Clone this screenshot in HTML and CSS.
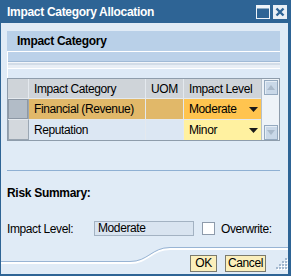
FILE: index.html
```html
<!DOCTYPE html>
<html>
<head>
<meta charset="utf-8">
<link rel="stylesheet" href="styles.css">
</head>
<body>
<div class="dialog">
  <div class="titlebar">
    <span class="title">Impact Category Allocation</span>
    <div class="tbtns">
      <svg class="tbtn" width="14" height="14" viewBox="0 0 14 14">
        <rect x="0.5" y="0.5" width="13" height="13" fill="#2e6495" stroke="#eef3f8"/>
        <rect x="1" y="1" width="12" height="2.5" fill="#eef3f8"/>
      </svg>
      <svg class="tbtn" width="14" height="14" viewBox="0 0 14 14">
        <rect x="0" y="0" width="14" height="14" fill="#e9eff5"/>
        <path d="M3.5 3.5 L10.5 10.5 M10.5 3.5 L3.5 10.5" stroke="#2e6495" stroke-width="2.4"/>
      </svg>
    </div>
  </div>
  <div class="body">
    <div class="panel-head">Impact Category</div>
    <div class="toolbar"></div>
    <div class="table">
      <div class="grid">
        <div class="cell hd sel-hd"></div>
        <div class="cell hd">Impact Category</div>
        <div class="cell hd">UOM</div>
        <div class="cell hd last">Impact Level</div>

        <div class="cell sel"><div class="selbox on"></div></div>
        <div class="cell r1">Financial (Revenue)</div>
        <div class="cell r1"></div>
        <div class="cell lvl lvl1 last"><span>Moderate</span><svg width="9" height="5" viewBox="0 0 9 5"><path d="M0 0 H9 L4.5 5 Z" fill="#1a1a1a"/></svg></div>

        <div class="cell sel bottom"><div class="selbox"></div></div>
        <div class="cell r2 bottom">Reputation</div>
        <div class="cell r2 bottom"></div>
        <div class="cell lvl lvl2 bottom last"><span>Minor</span><svg width="9" height="5" viewBox="0 0 9 5"><path d="M0 0 H9 L4.5 5 Z" fill="#1a1a1a"/></svg></div>
      </div>
      <div class="scroll">
        <div class="sbtn"><svg width="8" height="5" viewBox="0 0 8 5"><path d="M0 5 H8 L4 0 Z" fill="#a9b9ca"/></svg></div>
        <div class="sbtn"><svg width="8" height="5" viewBox="0 0 8 5"><path d="M0 0 H8 L4 5 Z" fill="#a9b9ca"/></svg></div>
      </div>
    </div>
    <div class="sep"></div>
    <div class="section">Risk Summary:</div>
    <div class="formrow">
      <span class="lbl">Impact Level:</span>
      <div class="input">Moderate</div>
      <div class="chk"></div>
      <span>Overwrite:</span>
    </div>
  </div>
  <div class="footer">
    <svg class="curve" width="287" height="32" viewBox="0 0 287 32">
      <path d="M0 21 L129 21 C147 21 151 7 169 7 L287 7" fill="none" stroke="#ffffff" stroke-width="2"/>
      <path d="M0 19.5 L129 19.5 C147 19.5 151 5.5 169 5.5 L287 5.5" fill="none" stroke="#98b4d4" stroke-width="1"/>
    </svg>
    <div class="btn ok">OK</div>
    <div class="btn cancel">Cancel</div>
    <svg class="grip" width="12" height="14" viewBox="0 0 12 14">
      <g fill="#ffffff">
        <rect x="10" y="2" width="2" height="2"/>
        <rect x="7" y="5" width="2" height="2"/><rect x="10" y="5" width="2" height="2"/>
        <rect x="4" y="8" width="2" height="2"/><rect x="7" y="8" width="2" height="2"/><rect x="10" y="8" width="2" height="2"/>
        <rect x="1" y="11" width="2" height="2"/><rect x="4" y="11" width="2" height="2"/><rect x="7" y="11" width="2" height="2"/><rect x="10" y="11" width="2" height="2"/>
      </g>
      <g fill="#a3b8cf">
        <rect x="9" y="1" width="2" height="2"/>
        <rect x="6" y="4" width="2" height="2"/><rect x="9" y="4" width="2" height="2"/>
        <rect x="3" y="7" width="2" height="2"/><rect x="6" y="7" width="2" height="2"/><rect x="9" y="7" width="2" height="2"/>
        <rect x="0" y="10" width="2" height="2"/><rect x="3" y="10" width="2" height="2"/><rect x="6" y="10" width="2" height="2"/><rect x="9" y="10" width="2" height="2"/>
      </g>
    </svg>
  </div>
</div>
</body>
</html>
```
FILE: styles.css
```css
* { box-sizing: border-box; }

body {
  margin: 0;
  font-family: "Liberation Sans", Arial, sans-serif;
  font-size: 12px;
  letter-spacing: -0.4px;
  color: #000;
  background: #e0ebf6;
}

.dialog {
  width: 291px;
  height: 276px;
  display: flex;
  flex-direction: column;
  border-left: 1px solid #2e6495;
  border-right: 3px solid #2e6495;
  border-bottom: 2px solid #2e6495;
  background: #e0ebf6;
  overflow: hidden;
}

.titlebar {
  height: 23px;
  flex: none;
  background: #2e6495;
  display: flex;
  align-items: center;
  padding: 1px 1px 0 6px;
  color: #fff;
  font-weight: bold;
  font-size: 12px;
}

.title { flex: 1; letter-spacing: -0.3px; }

.tbtns { display: flex; gap: 3px; }
.tbtn { display: block; }

.body {
  flex: 1;
  padding: 8px 8px 0 6px;
}

.panel-head {
  height: 20px;
  line-height: 20px;
  background: #b9d0e8;
  font-weight: bold;
  letter-spacing: -0.3px;
  padding-left: 10px;
}

.toolbar {
  height: 27px;
  border-top: 1px solid #fff;
  border-left: 1px solid #fff;
  background: linear-gradient(to bottom,
    #bbd1e9 0, #bbd1e9 9px,
    #a0bad6 9px, #a0bad6 10px,
    #f3f6fa 10px, #f3f6fa 11px,
    #d3dde8 11px, #d3dde8 13px,
    #e8eef5 13px, #e8eef5 16px,
    #ffffff 16px, #ffffff 17px,
    #dde9f6 17px, #dde9f6 26px);
}

.table {
  display: flex;
  height: 63px;
  border: 1px solid #8e9cab;
  background: #eef3f8;
}

.grid {
  display: grid;
  grid-template-columns: 21px 117px 38px 77px;
  grid-template-rows: 20px 21px 20px;
}

.cell {
  display: flex;
  align-items: center;
  padding-left: 5px;
  border-right: 1px solid #e4e9ee;
  border-bottom: 1px solid #e4e9ee;
  white-space: nowrap;
  overflow: hidden;
}
.cell.last { border-right: none; }
.cell.bottom { border-bottom: none; }

.hd { background: #cfd4d9; }
.sel-hd { padding: 0; }

.sel { padding: 0; background: #cfd4d9; border-right-color: #9ba7b3; }
.selbox {
  width: 100%;
  height: 100%;
  border-left: 1px solid #98a4b0;
  border-bottom: 1px solid #98a4b0;
  background: #d3d8dd;
}
.selbox.on {
  border: 1px solid #8d98a5;
  background: #b2bcc7;
}

.r1 { background: #e1b869; }
.r2 { background: #dce7f3; }

.lvl {
  justify-content: space-between;
  padding: 0 3px 0 5px;
}
.lvl svg { display: block; }
.lvl1 { background: #ffc44f; }
.lvl2 { background: #fff1a0; }

.scroll {
  flex: 1;
  border-left: 1px solid #b5c0cb;
  background: #eef3f8;
  display: flex;
  flex-direction: column;
  justify-content: space-between;
  padding: 1px 1px 0 2px;
}

.sbtn {
  width: 14px;
  height: 15px;
  border: 1px solid #94a9bf;
  background: #c9d8e8;
  box-shadow: inset 1px 1px 0 #e6eef6;
  display: flex;
  align-items: center;
  justify-content: center;
}
.sbtn svg { display: block; }

.sep {
  height: 1px;
  background: #8fb0d3;
  margin-top: 29px;
}

.section {
  font-weight: bold;
  letter-spacing: -0.3px;
  line-height: 14px;
  margin-top: 15px;
}

.formrow {
  display: flex;
  align-items: center;
  height: 15px;
  margin-top: 21px;
}

.lbl { width: 87px; }

.input {
  width: 100px;
  height: 15px;
  line-height: 13px;
  border: 1px solid #a3b2c2;
  background: #d9e4f0;
  padding-left: 3px;
}

.chk {
  width: 13px;
  height: 13px;
  background: #fff;
  border: 1px solid #8e9bab;
  margin: 0 6px 0 8px;
}

.footer {
  height: 32px;
  flex: none;
  position: relative;
  display: flex;
  justify-content: flex-end;
  align-items: flex-end;
  padding: 0 0 2px 0;
}

.curve {
  position: absolute;
  left: 0;
  top: 0;
}

.btn {
  position: relative;
  height: 17px;
  line-height: 15px;
  border: 1px solid #7b7b6e;
  background: #fbefbb;
  text-align: center;
}
.ok { width: 27px; margin-right: 8px; }
.cancel { width: 41px; margin-right: 10px; }

.grip { position: relative; display: block; margin-bottom: 1px; }
```
